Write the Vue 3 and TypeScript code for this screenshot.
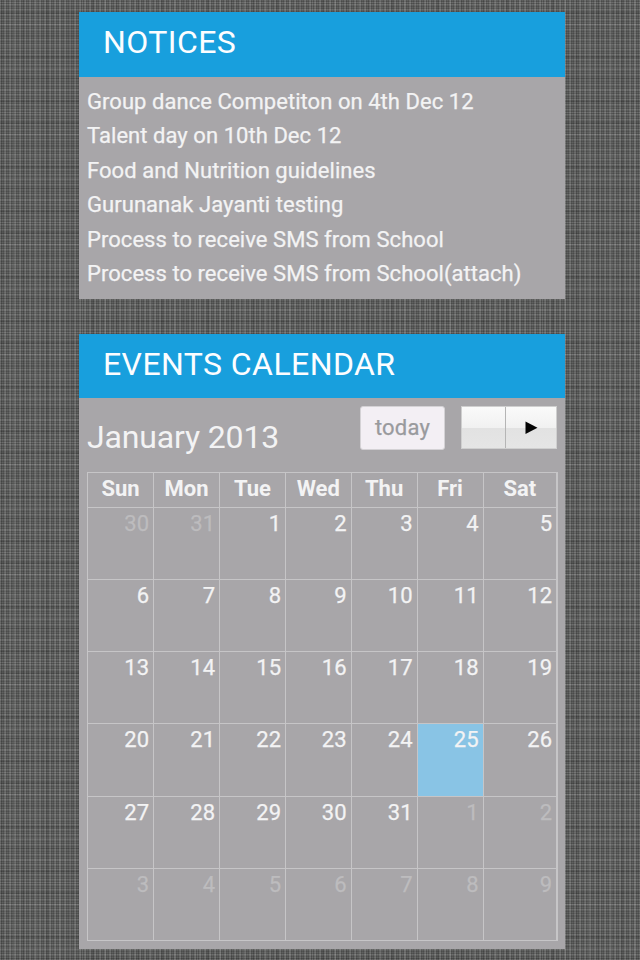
<script setup lang="ts">
interface Day {
  label: number
  muted: boolean
  today: boolean
}

const notices: string[] = [
  'Group dance Competiton on 4th Dec 12',
  'Talent day on 10th Dec 12',
  'Food and Nutrition guidelines',
  'Gurunanak Jayanti testing',
  'Process to receive SMS from School',
  'Process to receive SMS from School(attach)',
]

const weekdays: string[] = ['Sun', 'Mon', 'Tue', 'Wed', 'Thu', 'Fri', 'Sat']

// January 2013 starts on a Tuesday; the grid always shows six weeks.
const days: Day[] = Array.from({ length: 42 }, (_, i) => {
  const n = i - 1
  if (n < 1) return { label: n + 31, muted: true, today: false }
  if (n > 31) return { label: n - 31, muted: true, today: false }
  return { label: n, muted: false, today: n === 25 }
})
</script>

<template>
  <main class="page">
    <section class="panel notices">
      <h2 class="title">NOTICES</h2>
      <ul class="list">
        <li v-for="notice in notices" :key="notice">{{ notice }}</li>
      </ul>
    </section>

    <section class="panel events">
      <h2 class="title">EVENTS CALENDAR</h2>
      <div class="toolbar">
        <h3 class="month">January 2013</h3>
        <button class="today-btn" type="button">today</button>
        <div class="nav">
          <button type="button" aria-label="Previous"></button>
          <button type="button" aria-label="Next">
            <svg width="13" height="14" viewBox="0 0 13 14"><path d="M0.5 0.5 12.5 6.7 0.5 13Z" fill="#050505" /></svg>
          </button>
        </div>
      </div>
      <div class="calendar">
        <div v-for="name in weekdays" :key="name" class="head">{{ name }}</div>
        <div
          v-for="(day, i) in days"
          :key="i"
          class="day"
          :class="{ muted: day.muted, today: day.today }"
        >{{ day.label }}</div>
      </div>
    </section>
  </main>
</template>

<style>
body {
  margin: 0;
}
</style>

<style scoped>
.page {
  box-sizing: border-box;
  width: 640px;
  height: 960px;
  overflow: hidden;
  padding: 12px 75px 0 79px;
  display: flex;
  flex-direction: column;
  gap: 35px;
  font-family: Roboto, "Liberation Sans", sans-serif;
  color: #f3f3f4;
  background-color: #5f605f;
  background-image:
    repeating-linear-gradient(90deg, rgba(255, 255, 255, 0.12) 0 1px, rgba(0, 0, 0, 0.11) 1px 2px, transparent 2px 3px, rgba(0, 0, 0, 0.1) 3px 4px, rgba(255, 255, 255, 0.07) 4px 5px),
    repeating-linear-gradient(90deg, rgba(0, 0, 0, 0.08) 0 2px, transparent 2px 13px, rgba(255, 255, 255, 0.07) 13px 14px, transparent 14px 23px),
    repeating-linear-gradient(0deg, rgba(255, 255, 255, 0.09) 0 1px, rgba(0, 0, 0, 0.13) 1px 2px, transparent 2px 3px, rgba(0, 0, 0, 0.13) 3px 4px, transparent 4px 5px),
    repeating-linear-gradient(0deg, rgba(0, 0, 0, 0.1) 0 2px, transparent 2px 11px, rgba(255, 255, 255, 0.08) 11px 12px, transparent 12px 22px);
}

.panel {
  box-sizing: border-box;
  width: 486px;
  background: #a8a6a9;
}

.notices {
  height: 287px;
}

.events {
  height: 615px;
}

.title {
  box-sizing: border-box;
  height: 64px;
  margin: 0;
  padding-left: 24px;
  background: #189fdd;
  color: #fcfdff;
  font-size: 32px;
  font-weight: 400;
  letter-spacing: 0.42px;
  line-height: 60px;
  white-space: nowrap;
}

.notices .title {
  height: 65px;
}

.list {
  margin: 0;
  padding: 7.6px 8px 0;
  list-style: none;
  font-size: 22px;
  letter-spacing: 0.05px;
  line-height: 34.5px;
  white-space: nowrap;
  -webkit-text-stroke: 0.25px currentColor;
}

.toolbar {
  display: flex;
  align-items: flex-start;
  height: 74px;
  padding: 0 8px;
}

.month {
  flex: 1;
  margin: 0;
  font-size: 32px;
  font-weight: 400;
  letter-spacing: -0.15px;
  line-height: 78px;
  white-space: nowrap;
}

.today-btn {
  box-sizing: border-box;
  width: 85px;
  height: 44px;
  margin: 8px 16px 0 0;
  padding: 0;
  border: 1px solid #d4d2d5;
  border-radius: 3px;
  background: #f3eff4;
  color: #999a9d;
  font: inherit;
  font-size: 22px;
  letter-spacing: 0.2px;
  line-height: 42px;
  -webkit-text-stroke: 0.25px currentColor;
}

.nav {
  box-sizing: border-box;
  display: grid;
  grid-template-columns: 43px 1fr;
  width: 96px;
  height: 43px;
  margin-top: 8px;
  border: 1px solid #cfcfcf;
}

.nav button {
  display: flex;
  align-items: center;
  justify-content: center;
  padding: 0;
  border: 0;
  background: linear-gradient(#fafafa 0, #f1f1f1 21px, #e2e2e2 21px, #e5e5e5 100%);
}

.nav button + button {
  border-left: 1px solid #b5b5b5;
}

.calendar {
  box-sizing: border-box;
  display: grid;
  grid-template-columns: repeat(3, 66px) 65.6px repeat(2, 66px) 1fr;
  grid-template-rows: 34.6px repeat(6, 72.25px);
  width: 471px;
  height: 469px;
  margin-left: 8px;
  border: solid #c6c5c7;
  border-width: 0 2px 1px 0;
  font-size: 22px;
}

.head,
.day {
  box-sizing: border-box;
  border: solid #c6c5c7;
  border-width: 1px 0 0 1px;
}

.head {
  font-weight: 700;
  line-height: 31px;
  text-align: center;
}

.day {
  padding-right: 4px;
  line-height: 31px;
  text-align: right;
  -webkit-text-stroke: 0.25px currentColor;
}

.muted {
  color: #bdbcbe;
}

.today {
  background: #89c4e5;
}
</style>
